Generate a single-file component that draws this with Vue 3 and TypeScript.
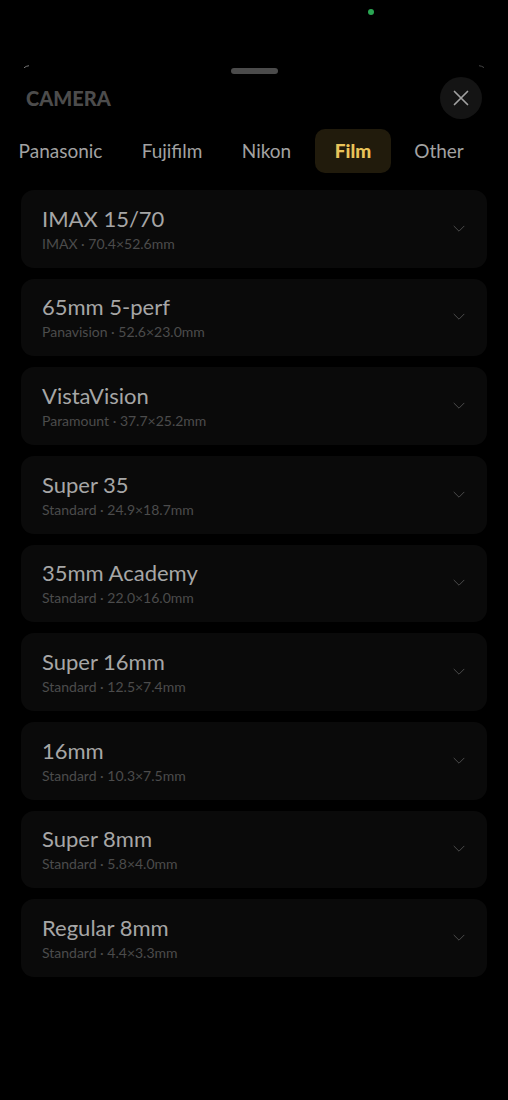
<script setup lang="ts">
import { ref } from 'vue'

interface Format {
  name: string
  maker: string
  size: string
}

const brands: string[] = ['Panasonic', 'Fujifilm', 'Nikon', 'Film', 'Other']
const activeBrand = ref('Film')

const formats: Format[] = [
  { name: 'IMAX 15/70', maker: 'IMAX', size: '70.4×52.6mm' },
  { name: '65mm 5-perf', maker: 'Panavision', size: '52.6×23.0mm' },
  { name: 'VistaVision', maker: 'Paramount', size: '37.7×25.2mm' },
  { name: 'Super 35', maker: 'Standard', size: '24.9×18.7mm' },
  { name: '35mm Academy', maker: 'Standard', size: '22.0×16.0mm' },
  { name: 'Super 16mm', maker: 'Standard', size: '12.5×7.4mm' },
  { name: '16mm', maker: 'Standard', size: '10.3×7.5mm' },
  { name: 'Super 8mm', maker: 'Standard', size: '5.8×4.0mm' },
  { name: 'Regular 8mm', maker: 'Standard', size: '4.4×3.3mm' },
]
</script>

<template>
  <div class="screen">
    <div class="status"><span class="indicator"></span></div>
    <main class="sheet">
      <svg class="edge edge-left" viewBox="0 0 8 4" aria-hidden="true"><path d="M1 2.8Q3 1 6 .7" /></svg>
      <svg class="edge edge-right" viewBox="0 0 8 4" aria-hidden="true"><path d="M2 .7Q5 1 7 2.6" /></svg>
      <div class="grabber"></div>
      <header class="header">
        <h1 class="title">CAMERA</h1>
        <button class="close" type="button" aria-label="Close">
          <svg viewBox="0 0 16 16" aria-hidden="true"><path d="M1.5 1.5l13 13M14.5 1.5l-13 13" /></svg>
        </button>
      </header>
      <nav class="tabs" aria-label="Brands">
        <button
          v-for="brand in brands"
          :key="brand"
          type="button"
          class="tab"
          :class="{ active: brand === activeBrand }"
          :aria-pressed="brand === activeBrand"
          @click="activeBrand = brand"
        >{{ brand }}</button>
      </nav>
      <section class="list">
        <button v-for="format in formats" :key="format.name" type="button" class="card">
          <span class="text">
            <span class="name">{{ format.name }}</span>
            <span class="detail">{{ format.maker }} · {{ format.size }}</span>
          </span>
          <svg class="chevron" viewBox="0 0 12 8" aria-hidden="true"><path d="M1 1.2l5 5 5-5" /></svg>
        </button>
      </section>
    </main>
  </div>
</template>

<style>
html,
body {
  background: #000;
}
</style>

<style scoped>
.screen {
  display: flex;
  flex-direction: column;
  box-sizing: border-box;
  min-height: 100vh;
  overflow: hidden;
  background: #000;
  font-family: Lato, 'Liberation Sans', sans-serif;
}

button {
  margin: 0;
  border: 0;
  font-family: inherit;
  cursor: pointer;
}

.status {
  display: flex;
  justify-content: flex-end;
  height: 53px;
  padding: 9px 134px 0 0;
  box-sizing: content-box;
}

.indicator {
  width: 6px;
  height: 6px;
  border-radius: 50%;
  background: #2aa653;
}

.sheet {
  position: relative;
  flex: 1;
  display: flex;
  flex-direction: column;
  border-radius: 42px 42px 0 0;
  background: #000;
}

.edge {
  position: absolute;
  top: 3px;
  width: 8px;
  height: 4px;
  fill: none;
  stroke: #777;
  stroke-width: 1;
}

.edge-left {
  left: 23px;
}

.edge-right {
  right: 23px;
  stroke: #444;
}

.grabber {
  align-self: center;
  width: 47px;
  height: 6px;
  margin-top: 6px;
  border-radius: 3px;
  background: #4b4b4b;
}

.header {
  display: flex;
  align-items: center;
  justify-content: space-between;
  padding: 3px 26px 0;
}

.title {
  margin: 0;
  color: #4c4c4c;
  font-size: 20px;
  font-weight: 900;
  line-height: 24px;
}

.close {
  display: grid;
  place-items: center;
  width: 42px;
  height: 42px;
  padding: 0;
  border-radius: 50%;
  background: #141414;
}

.close svg {
  width: 16px;
  height: 16px;
  fill: none;
  stroke: #a0a0a0;
  stroke-width: 1.7;
  stroke-linecap: round;
}

.tabs {
  display: grid;
  grid-template-columns: 119fr 92fr 85fr 76fr 84fr;
  gap: 6px;
  margin-top: 10px;
  padding: 0 27px 0 1px;
}

.tab {
  height: 44px;
  padding: 0;
  border-radius: 10px;
  background: transparent;
  color: #a2a2a2;
  font-size: 19px;
  line-height: 24px;
}

.tab.active {
  background: #211b0c;
  color: #e9c45a;
  font-weight: 900;
}

.list {
  flex: 1;
  display: grid;
  grid-auto-rows: 1fr;
  gap: 11px;
  padding: 17px 21px 123px;
}

.card {
  display: flex;
  align-items: center;
  justify-content: space-between;
  padding: 0 22px 0 21px;
  border-radius: 13px;
  background: #0a0a0a;
  text-align: left;
}

.text {
  display: flex;
  flex-direction: column;
  gap: 1px;
  padding-top: 1px;
}

.name {
  color: #a6a6a6;
  font-size: 22px;
  line-height: 28px;
}

.detail {
  color: #4c4c4c;
  font-size: 14px;
  line-height: 20px;
}

.chevron {
  width: 12px;
  height: 8px;
  fill: none;
  stroke: #4c4c4c;
  stroke-width: 1;
  stroke-linecap: round;
  stroke-linejoin: round;
}
</style>
